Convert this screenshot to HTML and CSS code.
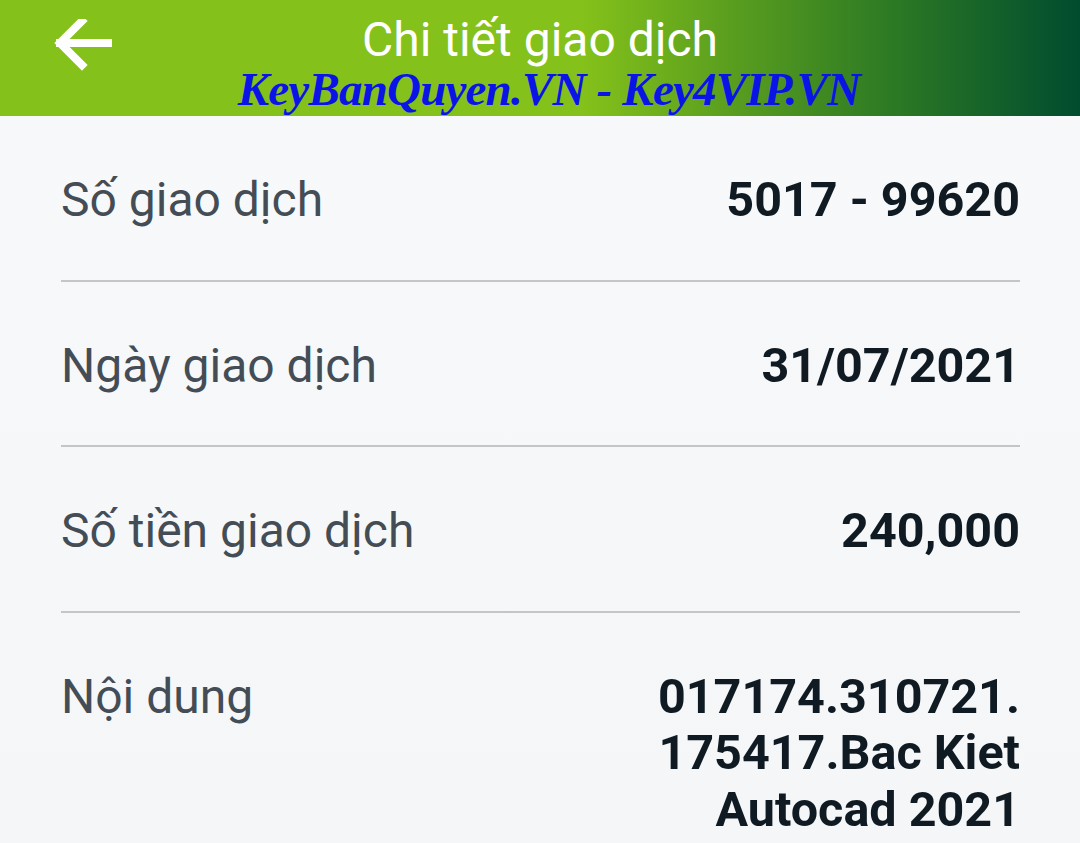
FILE: index.html
```html
<!DOCTYPE html>
<html lang="vi">
<head>
<meta charset="utf-8">
<title>Chi tiết giao dịch</title>
<link rel="stylesheet" href="styles.css">
</head>
<body>
<header class="topbar">
  <svg class="back" width="60" height="56" viewBox="0 0 60 56" aria-hidden="true">
    <path d="M57 24 H8 M30 2 L8 24 L30 46" fill="none" stroke="#fff" stroke-width="8" stroke-linecap="square" stroke-linejoin="miter"/>
  </svg>
  <div class="titles">
    <div class="title">Chi tiết giao dịch</div>
    <div class="mark">KeyBanQuyen.VN - Key4VIP.VN</div>
  </div>
</header>
<main class="details">
  <div class="row">
    <div class="label">Số giao dịch</div>
    <div class="value">5017 - 99620</div>
  </div>
  <div class="row">
    <div class="label">Ngày giao dịch</div>
    <div class="value">31/07/2021</div>
  </div>
  <div class="row">
    <div class="label">Số tiền giao dịch</div>
    <div class="value">240,000</div>
  </div>
  <div class="row last">
    <div class="label">Nội dung</div>
    <div class="value">017174.310721.<br>175417.Bac Kiet<br>Autocad 2021</div>
  </div>
</main>
</body>
</html>
```
FILE: styles.css
```css
html, body {
  margin: 0;
  padding: 0;
}
body {
  width: 1080px;
  height: 843px;
  overflow: hidden;
  background: linear-gradient(180deg, #f8f9fa 0%, #f4f6f8 100%);
  font-family: Roboto, "Noto Sans", sans-serif;
}
.topbar {
  position: relative;
  height: 116px;
  background: linear-gradient(90deg, #84c11a 0%, #84c11a 54%, #5fa21e 66%, #2e7b24 82%, #004c2f 100%);
}
.back {
  position: absolute;
  left: 52px;
  top: 19px;
}
.titles {
  display: flex;
  flex-direction: column;
  align-items: center;
  padding-top: 12px;
}
.title {
  color: #fff;
  font-size: 48px;
  line-height: 56px;
  font-weight: 400;
}
.mark {
  color: #0a14e6;
  font-family: "Liberation Serif", "Times New Roman", serif;
  font-style: italic;
  font-weight: 700;
  font-size: 47px;
  line-height: 42px;
  letter-spacing: -0.8px;
  margin-left: 18px;
}
.details {
  padding: 0 60px 0 61px;
}
.row {
  display: flex;
  justify-content: space-between;
  align-items: flex-start;
  padding: 56px 0 51px;
  border-bottom: 2px solid #c4c5c7;
}
.row.last {
  border-bottom: none;
  padding-bottom: 0;
}
.label {
  color: #444d55;
  font-size: 48px;
  line-height: 56px;
}
.value {
  color: #0f1a22;
  font-size: 48.5px;
  line-height: 56.5px;
  font-weight: 700;
  text-align: right;
}
```
